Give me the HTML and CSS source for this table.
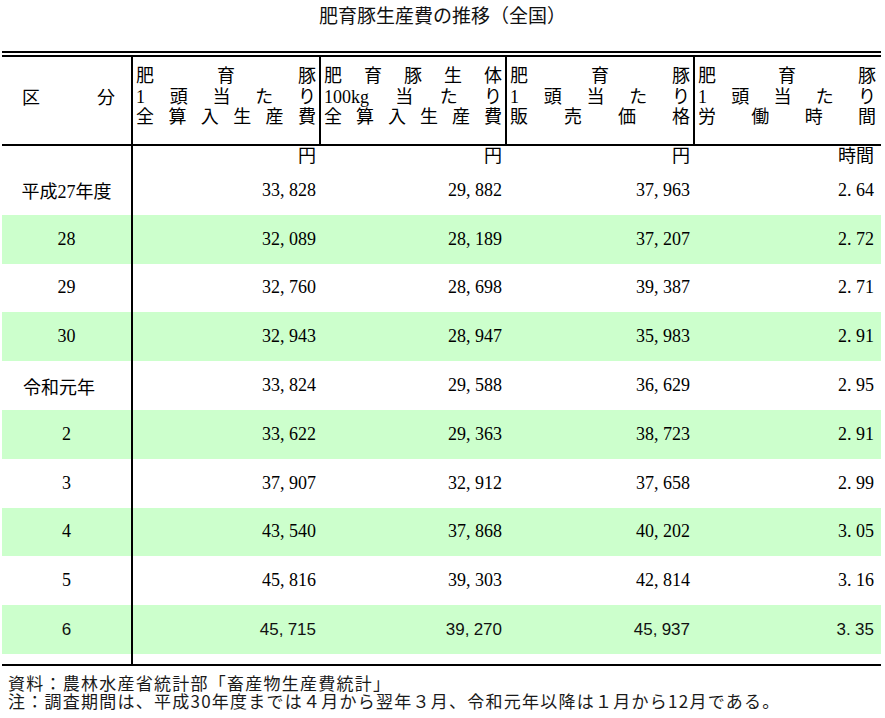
FILE: index.html
```html
<!DOCTYPE html>
<html lang="ja">
<head>
<meta charset="utf-8">
<title>肥育豚生産費の推移（全国）</title>
<link rel="stylesheet" href="styles.css">
</head>
<body>
<div class="page">
  <h1 class="title">肥育豚生産費の推移（全国）</h1>
  <div class="table">
    <div class="row head">
      <div class="cell first"><div class="ln"><span>区</span><span>分</span></div></div>
      <div class="cell hc">
        <div class="ln"><span>肥</span><span>育</span><span>豚</span></div>
        <div class="ln"><span>1</span><span>頭</span><span>当</span><span>た</span><span>り</span></div>
        <div class="ln"><span>全</span><span>算</span><span>入</span><span>生</span><span>産</span><span>費</span></div>
      </div>
      <div class="cell hc">
        <div class="ln"><span>肥</span><span>育</span><span>豚</span><span>生</span><span>体</span></div>
        <div class="ln"><span>100kg</span><span>当</span><span>た</span><span>り</span></div>
        <div class="ln"><span>全</span><span>算</span><span>入</span><span>生</span><span>産</span><span>費</span></div>
      </div>
      <div class="cell hc">
        <div class="ln"><span>肥</span><span>育</span><span>豚</span></div>
        <div class="ln"><span>1</span><span>頭</span><span>当</span><span>た</span><span>り</span></div>
        <div class="ln"><span>販</span><span>売</span><span>価</span><span>格</span></div>
      </div>
      <div class="cell hc last">
        <div class="ln"><span>肥</span><span>育</span><span>豚</span></div>
        <div class="ln"><span>1</span><span>頭</span><span>当</span><span>た</span><span>り</span></div>
        <div class="ln"><span>労</span><span>働</span><span>時</span><span>間</span></div>
      </div>
    </div>

    <div class="row unit">
      <div class="cell first"></div>
      <div class="cell num">円</div>
      <div class="cell num">円</div>
      <div class="cell num">円</div>
      <div class="cell num last">時間</div>
    </div>

    <div class="row data">
      <div class="cell first label">平成27年度</div>
      <div class="cell num">33<span class="c">,</span>828</div>
      <div class="cell num">29<span class="c">,</span>882</div>
      <div class="cell num">37<span class="c">,</span>963</div>
      <div class="cell num last">2<span class="c">.</span>64</div>
    </div>
    <div class="row data green">
      <div class="cell first label">28</div>
      <div class="cell num">32<span class="c">,</span>089</div>
      <div class="cell num">28<span class="c">,</span>189</div>
      <div class="cell num">37<span class="c">,</span>207</div>
      <div class="cell num last">2<span class="c">.</span>72</div>
    </div>
    <div class="row data">
      <div class="cell first label">29</div>
      <div class="cell num">32<span class="c">,</span>760</div>
      <div class="cell num">28<span class="c">,</span>698</div>
      <div class="cell num">39<span class="c">,</span>387</div>
      <div class="cell num last">2<span class="c">.</span>71</div>
    </div>
    <div class="row data green">
      <div class="cell first label">30</div>
      <div class="cell num">32<span class="c">,</span>943</div>
      <div class="cell num">28<span class="c">,</span>947</div>
      <div class="cell num">35<span class="c">,</span>983</div>
      <div class="cell num last">2<span class="c">.</span>91</div>
    </div>
    <div class="row data">
      <div class="cell first label era">令和元年</div>
      <div class="cell num">33<span class="c">,</span>824</div>
      <div class="cell num">29<span class="c">,</span>588</div>
      <div class="cell num">36<span class="c">,</span>629</div>
      <div class="cell num last">2<span class="c">.</span>95</div>
    </div>
    <div class="row data green">
      <div class="cell first label">2</div>
      <div class="cell num">33<span class="c">,</span>622</div>
      <div class="cell num">29<span class="c">,</span>363</div>
      <div class="cell num">38<span class="c">,</span>723</div>
      <div class="cell num last">2<span class="c">.</span>91</div>
    </div>
    <div class="row data">
      <div class="cell first label">3</div>
      <div class="cell num">37<span class="c">,</span>907</div>
      <div class="cell num">32<span class="c">,</span>912</div>
      <div class="cell num">37<span class="c">,</span>658</div>
      <div class="cell num last">2<span class="c">.</span>99</div>
    </div>
    <div class="row data green">
      <div class="cell first label">4</div>
      <div class="cell num">43<span class="c">,</span>540</div>
      <div class="cell num">37<span class="c">,</span>868</div>
      <div class="cell num">40<span class="c">,</span>202</div>
      <div class="cell num last">3<span class="c">.</span>05</div>
    </div>
    <div class="row data">
      <div class="cell first label">5</div>
      <div class="cell num">45<span class="c">,</span>816</div>
      <div class="cell num">39<span class="c">,</span>303</div>
      <div class="cell num">42<span class="c">,</span>814</div>
      <div class="cell num last">3<span class="c">.</span>16</div>
    </div>
    <div class="row data green latest">
      <div class="cell first label">6</div>
      <div class="cell num">45<span class="c">,</span>715</div>
      <div class="cell num">39<span class="c">,</span>270</div>
      <div class="cell num">45<span class="c">,</span>937</div>
      <div class="cell num last">3<span class="c">.</span>35</div>
    </div>

    <div class="row spacer">
      <div class="cell first"></div>
      <div class="cell"></div>
      <div class="cell"></div>
      <div class="cell"></div>
      <div class="cell last"></div>
    </div>
  </div>
  <div class="notes">
    <p>資料：農林水産省統計部「畜産物生産費統計」</p>
    <p>注：調査期間は、平成30年度までは４月から翌年３月、令和元年以降は１月から12月である。</p>
  </div>
</div>
</body>
</html>
```

FILE: styles.css
```css
html, body {
  margin: 0;
  padding: 0;
  background: #ffffff;
}

.page {
  width: 885px;
  color: #000;
  font-family: "Liberation Serif", "Noto Sans CJK JP", serif;
}

.title {
  margin: 0 0 21px 0;
  height: 30px;
  line-height: 30px;
  text-align: center;
  font-family: "Noto Sans CJK JP", sans-serif;
  font-size: 19px;
  font-weight: 400;
  color: #111;
}

.table {
  width: 879px;
  margin-left: 2px;
  border-top: 6px double #000;
  border-bottom: 2px solid #000;
  font-size: 18px;
}

.row {
  display: grid;
  grid-template-columns: 131px 188px 186px 188px 186px;
}

.cell {
  box-sizing: border-box;
}

.cell.first {
  border-right: 2px solid #000;
}

/* header */
.head {
  height: 87px;
  border-bottom: 2px solid #000;
}

.head .cell {
  display: flex;
  flex-direction: column;
  padding: 9px 3px 0 3px;
  line-height: 20.5px;
}

.head .hc {
  border-right: 2px solid #000;
}

.head .hc.last {
  border-right: none;
  padding-right: 5px;
}

.head .cell.first {
  justify-content: center;
  padding: 0 16px 5px 20px;
}

.ln {
  display: flex;
  justify-content: space-between;
  white-space: nowrap;
}

/* unit row */
.unit {
  height: 20px;
  line-height: 20px;
}

/* body rows */
.data {
  height: 48.8px;
}

.data .cell,
.unit .cell {
  display: flex;
  align-items: center;
}

.num {
  justify-content: flex-end;
  padding-right: 5px;
}

.num.last {
  padding-right: 7px;
}

.label {
  justify-content: center;
}

.label.era {
  justify-content: flex-start;
  padding-left: 21px;
}

.c {
  display: inline-block;
  width: 9px;
  text-align: left;
}

.green {
  background: #ccffcc;
}

.latest {
  font-family: "Liberation Sans", "Noto Sans CJK JP", sans-serif;
  font-size: 17px;
  font-weight: 400;
  color: #111;
}

.spacer {
  height: 10px;
}

/* notes */
.notes {
  margin-top: 8px;
  padding-left: 8px;
  font-family: "Noto Sans CJK JP", sans-serif;
  font-size: 17px;
  letter-spacing: 1.25px;
  line-height: 18px;
  color: #1a1a1a;
}

.notes p {
  margin: 0;
  white-space: nowrap;
}
```
